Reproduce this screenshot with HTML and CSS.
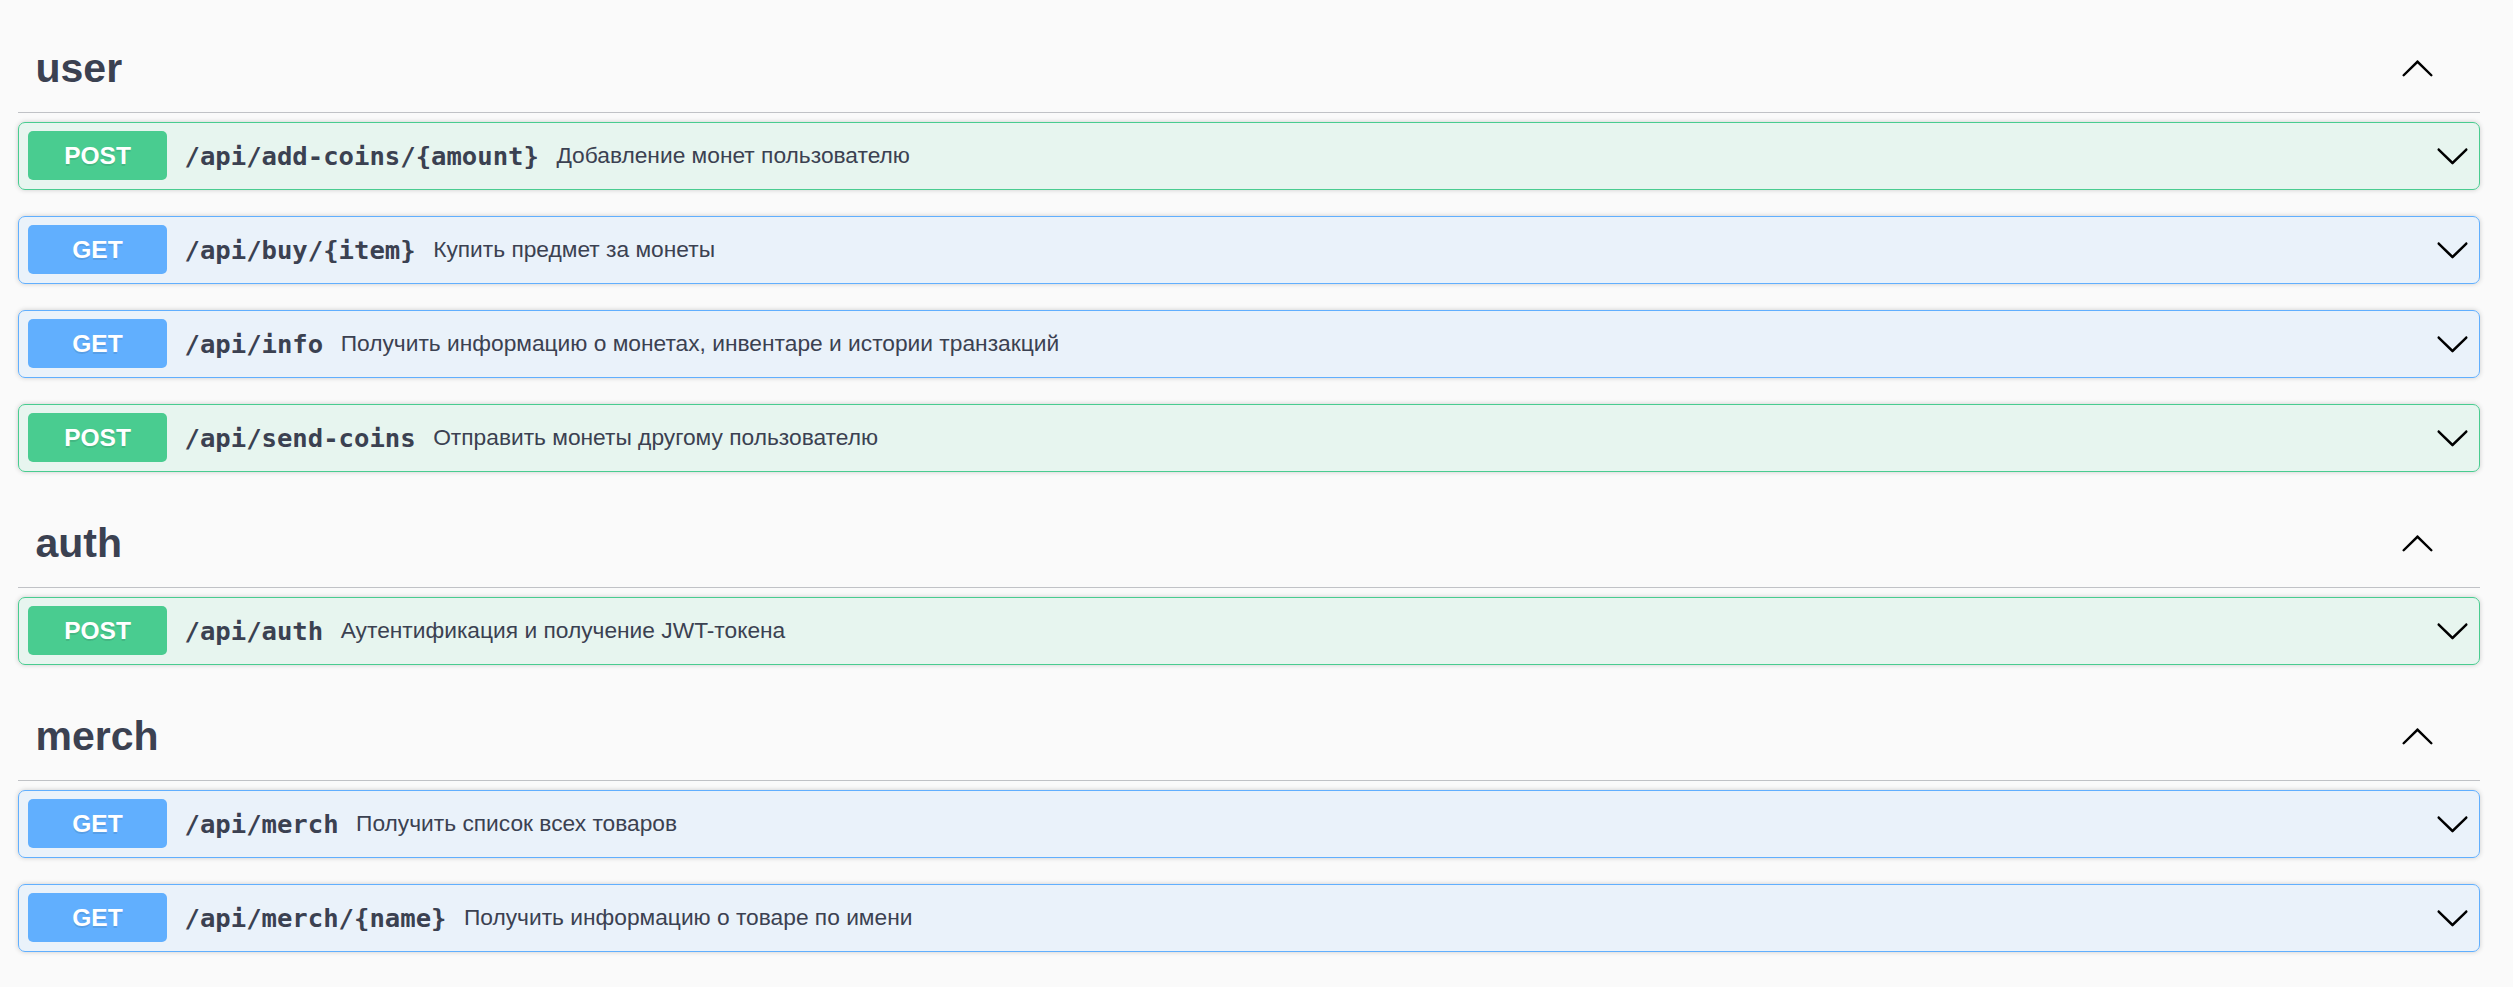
FILE: index.html
```html
<!DOCTYPE html>
<html lang="ru">
<head>
<meta charset="utf-8">
<title>Swagger UI</title>
<link rel="stylesheet" href="styles.css">
</head>
<body>
<div class="wrapper">

  <section class="tag-section">
    <div class="tag">
      <h3 class="tag-name">user</h3>
      <button class="expand" aria-label="collapse">
        <svg viewBox="0 0 20 20" width="35" height="35"><path d="M17.418 14.908c.271.268.709.268.979 0s.271-.701 0-.969l-7.908-7.83c-.27-.268-.707-.268-.979 0l-7.908 7.83c-.27.268-.27.701 0 .969.271.268.709.268.979 0L10 7.775l7.418 7.133z"/></svg>
      </button>
    </div>
    <div class="opblock post">
      <div class="summary">
        <span class="method">POST</span>
        <span class="path">/api/add-coins/{amount}</span>
        <span class="desc">Добавление монет пользователю</span>
        <svg class="arrow" viewBox="0 0 20 20" width="35" height="35"><path d="M17.418 6.109c.272-.268.709-.268.979 0s.271.701 0 .969l-7.908 7.83c-.27.268-.707.268-.979 0l-7.908-7.830c-.27-.268-.27-.701 0-.969.271-.268.709-.268.979 0L10 13.25l7.418-7.141z"/></svg>
      </div>
    </div>
    <div class="opblock get">
      <div class="summary">
        <span class="method">GET</span>
        <span class="path">/api/buy/{item}</span>
        <span class="desc">Купить предмет за монеты</span>
        <svg class="arrow" viewBox="0 0 20 20" width="35" height="35"><path d="M17.418 6.109c.272-.268.709-.268.979 0s.271.701 0 .969l-7.908 7.83c-.27.268-.707.268-.979 0l-7.908-7.83c-.27-.268-.27-.701 0-.969.271-.268.709-.268.979 0L10 13.25l7.418-7.141z"/></svg>
      </div>
    </div>
    <div class="opblock get">
      <div class="summary">
        <span class="method">GET</span>
        <span class="path">/api/info</span>
        <span class="desc">Получить информацию о монетах, инвентаре и истории транзакций</span>
        <svg class="arrow" viewBox="0 0 20 20" width="35" height="35"><path d="M17.418 6.109c.272-.268.709-.268.979 0s.271.701 0 .969l-7.908 7.83c-.27.268-.707.268-.979 0l-7.908-7.83c-.27-.268-.27-.701 0-.969.271-.268.709-.268.979 0L10 13.25l7.418-7.141z"/></svg>
      </div>
    </div>
    <div class="opblock post">
      <div class="summary">
        <span class="method">POST</span>
        <span class="path">/api/send-coins</span>
        <span class="desc">Отправить монеты другому пользователю</span>
        <svg class="arrow" viewBox="0 0 20 20" width="35" height="35"><path d="M17.418 6.109c.272-.268.709-.268.979 0s.271.701 0 .969l-7.908 7.83c-.27.268-.707.268-.979 0l-7.908-7.83c-.27-.268-.27-.701 0-.969.271-.268.709-.268.979 0L10 13.25l7.418-7.141z"/></svg>
      </div>
    </div>
  </section>

  <section class="tag-section">
    <div class="tag">
      <h3 class="tag-name">auth</h3>
      <button class="expand" aria-label="collapse">
        <svg viewBox="0 0 20 20" width="35" height="35"><path d="M17.418 14.908c.271.268.709.268.979 0s.271-.701 0-.969l-7.908-7.83c-.27-.268-.707-.268-.979 0l-7.908 7.83c-.27.268-.27.701 0 .969.271.268.709.268.979 0L10 7.775l7.418 7.133z"/></svg>
      </button>
    </div>
    <div class="opblock post">
      <div class="summary">
        <span class="method">POST</span>
        <span class="path">/api/auth</span>
        <span class="desc">Аутентификация и получение JWT-токена</span>
        <svg class="arrow" viewBox="0 0 20 20" width="35" height="35"><path d="M17.418 6.109c.272-.268.709-.268.979 0s.271.701 0 .969l-7.908 7.83c-.27.268-.707.268-.979 0l-7.908-7.83c-.27-.268-.27-.701 0-.969.271-.268.709-.268.979 0L10 13.25l7.418-7.141z"/></svg>
      </div>
    </div>
  </section>

  <section class="tag-section">
    <div class="tag">
      <h3 class="tag-name">merch</h3>
      <button class="expand" aria-label="collapse">
        <svg viewBox="0 0 20 20" width="35" height="35"><path d="M17.418 14.908c.271.268.709.268.979 0s.271-.701 0-.969l-7.908-7.83c-.27-.268-.707-.268-.979 0l-7.908 7.83c-.27.268-.27.701 0 .969.271.268.709.268.979 0L10 7.775l7.418 7.133z"/></svg>
      </button>
    </div>
    <div class="opblock get">
      <div class="summary">
        <span class="method">GET</span>
        <span class="path">/api/merch</span>
        <span class="desc">Получить список всех товаров</span>
        <svg class="arrow" viewBox="0 0 20 20" width="35" height="35"><path d="M17.418 6.109c.272-.268.709-.268.979 0s.271.701 0 .969l-7.908 7.83c-.27.268-.707.268-.979 0l-7.908-7.83c-.27-.268-.27-.701 0-.969.271-.268.709-.268.979 0L10 13.25l7.418-7.141z"/></svg>
      </div>
    </div>
    <div class="opblock get">
      <div class="summary">
        <span class="method">GET</span>
        <span class="path">/api/merch/{name}</span>
        <span class="desc">Получить информацию о товаре по имени</span>
        <svg class="arrow" viewBox="0 0 20 20" width="35" height="35"><path d="M17.418 6.109c.272-.268.709-.268.979 0s.271.701 0 .969l-7.908 7.83c-.27.268-.707.268-.979 0l-7.908-7.83c-.27-.268-.27-.701 0-.969.271-.268.709-.268.979 0L10 13.25l7.418-7.141z"/></svg>
      </div>
    </div>
  </section>

</div>
</body>
</html>
```

FILE: styles.css
```css
html, body {
  margin: 0;
  padding: 0;
  background: #fafafa;
}

body {
  font-family: "Liberation Sans", Arial, sans-serif;
  color: #3b4151;
}

.wrapper {
  padding: 23px 33px 0 18px;
}

.tag-section {
  display: flex;
  flex-direction: column;
}

.tag {
  display: flex;
  align-items: center;
  padding: 17.5px 35px 17.5px 17.5px;
  margin: 0 0 9px;
  border-bottom: 1px solid rgba(59, 65, 81, 0.3);
}

.tag-name {
  flex: 1;
  margin: 0;
  font-size: 41px;
  line-height: 54px;
  font-weight: 700;
  color: #3b4151;
}

.expand {
  display: flex;
  align-items: center;
  padding: 1.75px 10.5px;
  border: none;
  background: none;
}

.expand svg,
.arrow {
  display: block;
  fill: #000;
  flex: none;
}

.opblock {
  margin: 0 0 26px;
  border: 1px solid #000;
  border-radius: 7px;
  box-shadow: 0 0 5px rgba(0, 0, 0, 0.19);
}

.opblock.post {
  border-color: #49cc90;
  background: rgba(73, 204, 144, 0.1);
}

.opblock.get {
  border-color: #61affe;
  background: rgba(97, 175, 254, 0.1);
}

.summary {
  display: flex;
  align-items: center;
  padding: 8px 9px 9px 9px;
}

.method {
  flex: none;
  min-width: 139px;
  padding: 10.5px 0;
  border-radius: 5px;
  font-family: "Liberation Sans", Arial, sans-serif;
  font-size: 24.5px;
  line-height: 28px;
  font-weight: 700;
  text-align: center;
  color: #fff;
  text-shadow: 0 2px 0 rgba(0, 0, 0, 0.1);
}

.post .method { background: #49cc90; }
.get .method { background: #61affe; }

.path {
  flex: none;
  padding: 0 17.5px;
  font-family: "DejaVu Sans Mono", monospace;
  font-size: 25.6px;
  font-weight: 700;
  color: #3b4151;
}

.desc {
  flex: 1;
  font-family: "Liberation Sans", Arial, sans-serif;
  font-size: 22.75px;
  color: #3b4151;
}
```
